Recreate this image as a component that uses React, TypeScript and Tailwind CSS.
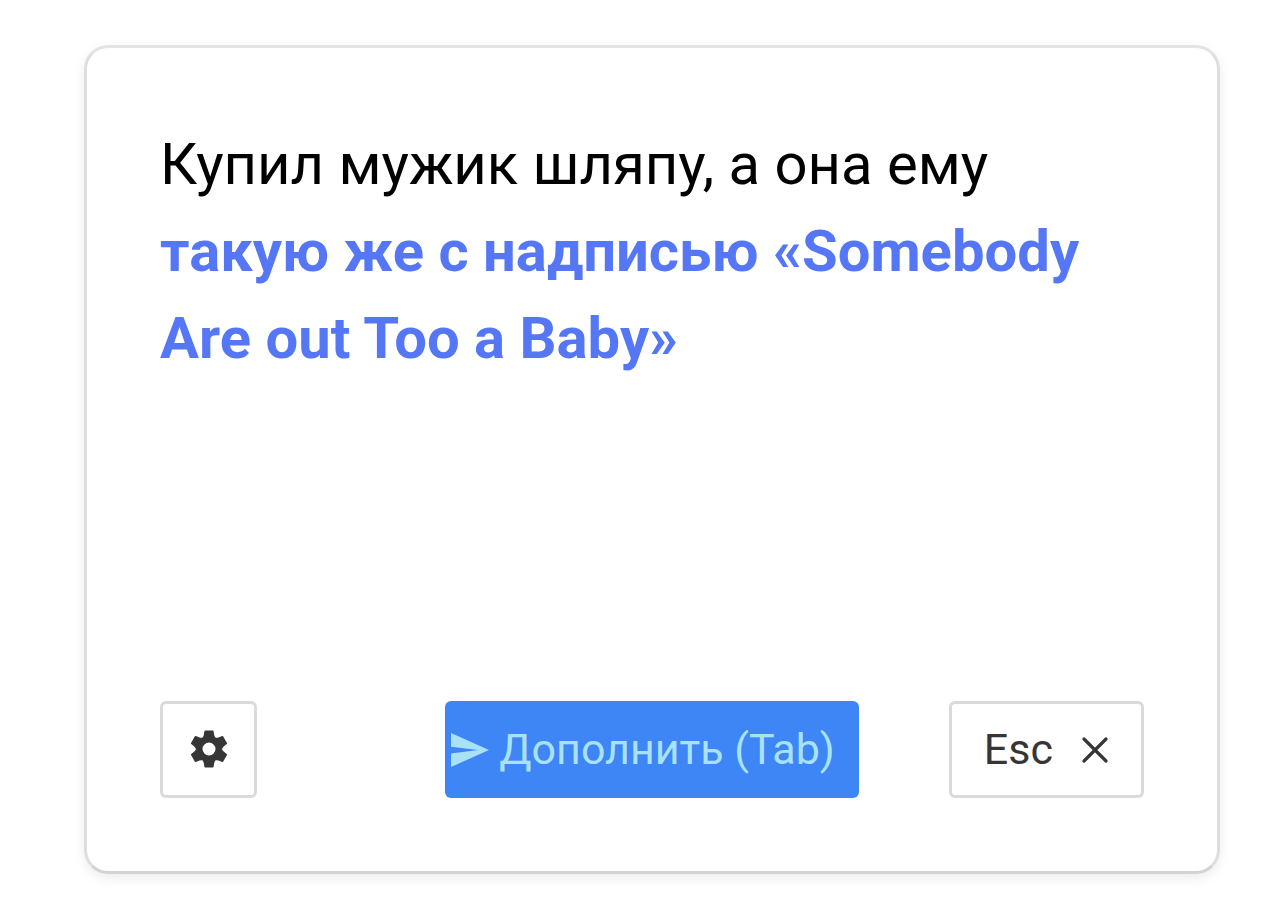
import { useState } from "react";

const PROMPT = "Купил мужик шляпу, а она ему";
const COMPLETION = "такую же с надписью «Somebody Are out Too a Baby»";

const TEETH = [0, 60, 120, 180, 240, 300];

function GearIcon() {
  return (
    <svg className="size-12" viewBox="-24 -24 48 48" aria-hidden="true">
      <circle r="9.7" fill="none" stroke="currentColor" strokeWidth="6.4" />
      {TEETH.map((angle) => (
        <path
          key={angle}
          d="M-3.7-18.6H3.7Q4.5-18.6 4.6-17.8L5.2-14Q5.5-12.6 6.6-11.2L0-9L-6.6-11.2Q-5.5-12.6-5.2-14L-4.6-17.8Q-4.5-18.6-3.7-18.6Z"
          fill="currentColor"
          transform={`rotate(${angle})`}
        />
      ))}
    </svg>
  );
}

function SendIcon() {
  return (
    <svg className="h-[34px] w-[38px]" viewBox="0 0 38 34" aria-hidden="true">
      <path d="M0 0L38 17L0 34V20.4L27 17L0 13.8Z" fill="currentColor" />
    </svg>
  );
}

function CloseIcon() {
  return (
    <svg
      className="size-11"
      viewBox="0 0 44 44"
      stroke="currentColor"
      strokeWidth="3.2"
      strokeLinecap="round"
      aria-hidden="true"
    >
      <path d="M11 11L33 33M33 11L11 33" />
    </svg>
  );
}

export default function App() {
  const [completion, setCompletion] = useState(COMPLETION);

  return (
    <main className="min-h-screen bg-white pt-[45px] pr-[60px] pb-8 pl-[84px] font-['Roboto','Noto_Sans',sans-serif]">
      <section className="flex min-h-[829px] flex-col rounded-3xl border-[3px] border-[#dedede] border-t-[#e4e4e4] border-b-[#d3d3d3] p-[73px] shadow-[0_4px_12px_rgba(0,0,0,0.08)]">
        <p className="grow text-[58px] leading-[87px] text-black">
          {PROMPT}{" "}
          <strong className="font-bold text-[#5677f5]">{completion}</strong>
        </p>

        <div className="grid grid-cols-[1fr_auto_1fr] items-center">
          <button
            aria-label="Настройки"
            className="flex size-[97px] items-center justify-center rounded-md border-[3px] border-[#dadada] pb-[2px] text-[#363636]"
          >
            <GearIcon />
          </button>
          <button
            className="flex h-[97px] items-center gap-[10px] rounded-md bg-[#3e86f5] pr-6 pl-[6px] text-[43px] text-[#a9e2f8]"
            onClick={() => setCompletion(COMPLETION)}
          >
            <SendIcon />
            Дополнить (Tab)
          </button>
          <button
            className="flex h-[97px] items-center gap-5 justify-self-end rounded-md border-[3px] border-[#dadada] pr-6 pl-8 text-[43px] text-[#363636]"
            onClick={() => setCompletion("")}
          >
            Esc
            <CloseIcon />
          </button>
        </div>
      </section>
    </main>
  );
}
